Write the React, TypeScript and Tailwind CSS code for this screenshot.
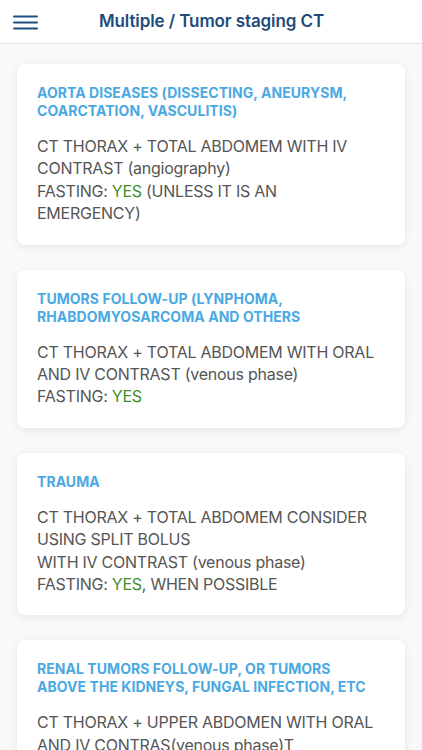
import React from "react";

const Yes = () => <span className="text-[#3f8f2a]">YES</span>;

const cards: { title: string; body: React.ReactNode }[] = [
  {
    title: "AORTA DISEASES (DISSECTING, ANEURYSM, COARCTATION, VASCULITIS)",
    body: (
      <>
        CT THORAX + TOTAL ABDOMEM WITH IV CONTRAST (angiography)
        <br />
        FASTING: <Yes /> (UNLESS IT IS AN EMERGENCY)
      </>
    ),
  },
  {
    title: "TUMORS FOLLOW-UP (LYNPHOMA, RHABDOMYOSARCOMA AND OTHERS",
    body: (
      <>
        CT THORAX + TOTAL ABDOMEM WITH ORAL AND IV CONTRAST (venous phase)
        <br />
        FASTING: <Yes />
      </>
    ),
  },
  {
    title: "TRAUMA",
    body: (
      <>
        CT THORAX + TOTAL ABDOMEM CONSIDER USING SPLIT BOLUS
        <br />
        WITH IV CONTRAST (venous phase)
        <br />
        FASTING: <Yes />, WHEN POSSIBLE
      </>
    ),
  },
  {
    title: "RENAL TUMORS FOLLOW-UP, OR TUMORS ABOVE THE KIDNEYS, FUNGAL INFECTION, ETC",
    body: (
      <>
        CT THORAX + UPPER ABDOMEN WITH ORAL AND IV CONTRAS(venous phase)T
        <br />
        FASTING: <Yes />
      </>
    ),
  },
];

export default function App() {
  return (
    <div className="w-[422px] h-[750px] overflow-hidden bg-[#f9f9f9] font-['Inter',sans-serif]">
      <header className="h-[44px] bg-white border-b border-[#e2e2e2] flex items-center relative">
        <svg
          className="absolute left-[13px] top-[15px]"
          width="25"
          height="15"
          viewBox="0 0 25 15"
        >
          <g stroke="#1f4e7d" strokeWidth="2" strokeLinecap="round">
            <line x1="1" y1="1.5" x2="24" y2="1.5" />
            <line x1="1" y1="7.5" x2="24" y2="7.5" />
            <line x1="1" y1="13.5" x2="24" y2="13.5" />
          </g>
        </svg>
        <h1 className="w-full text-center pl-[1px] text-[17px] font-semibold text-[#1e4b7a] tracking-[-0.1px]">
          Multiple / Tumor staging CT
        </h1>
      </header>
      <main className="px-[17px] pt-[20px] flex flex-col gap-[25px]">
        {cards.map((c, i) => (
          <section
            key={i}
            className="bg-white rounded-[8px] shadow-[0_2px_10px_rgba(0,0,0,0.08)] pl-[20px] pr-[28px] pt-[20px] pb-[20px]"
          >
            <h2 className="text-[14px] leading-[18px] font-bold text-[#4aa9e2] tracking-[0.05px]">
              {c.title}
            </h2>
            <p className="mt-[15px] text-[16px] leading-[22.4px] tracking-[-0.25px] text-[#555555]">
              {c.body}
            </p>
          </section>
        ))}
      </main>
    </div>
  );
}
